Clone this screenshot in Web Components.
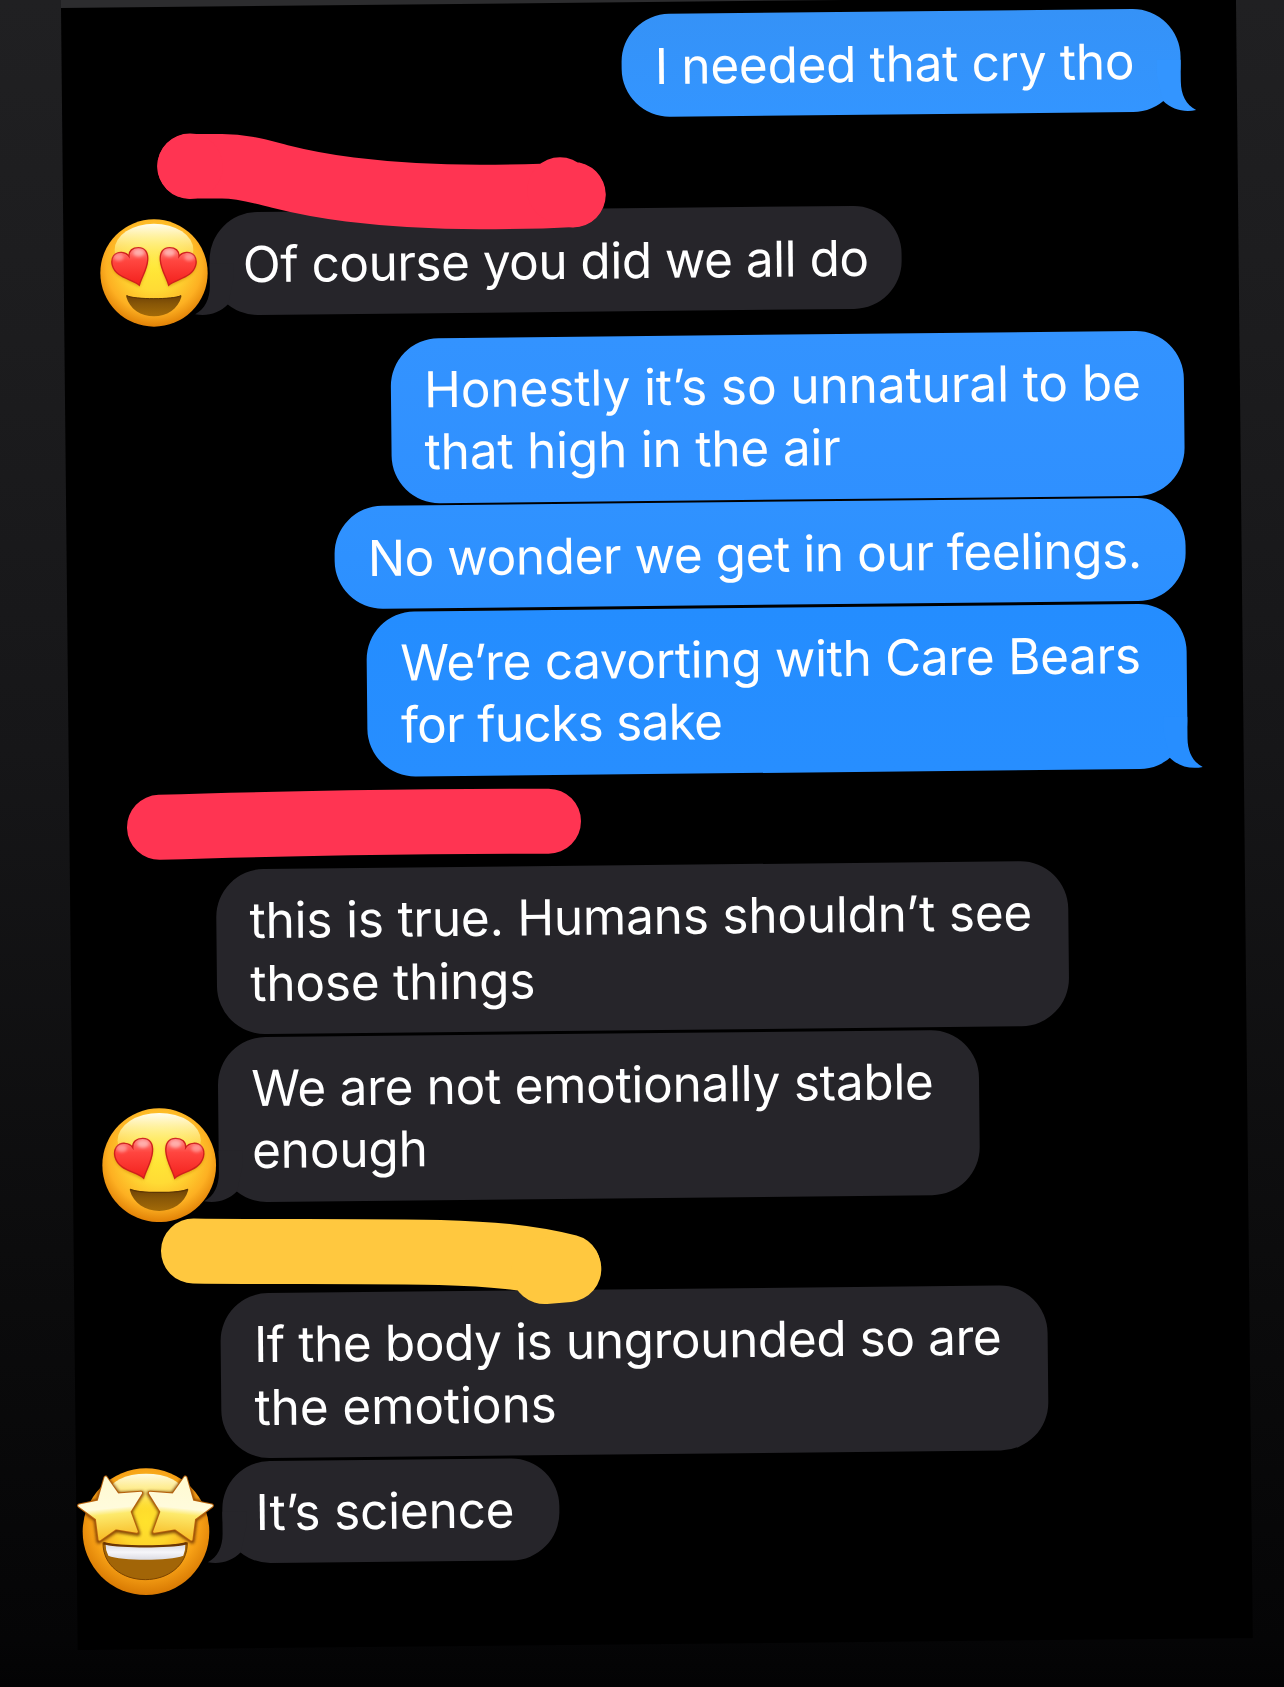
<!DOCTYPE html>
<html lang="en">
<head>
  <meta charset="UTF-8">
  <meta name="viewport" content="width=device-width, initial-scale=1.0">
  <title>Group chat</title>
  <style>
    html, body {
      margin: 0;
      height: 1687px;
      overflow: hidden;
    }

    body {
      display: flow-root;
      position: relative;
      font-family: Inter, "Liberation Sans", sans-serif;
      color: #fff;
      background:
        linear-gradient(#2c2c2e, #2c2c2e) 61px 0 / 800px 10px no-repeat,
        linear-gradient(#202022, #1c1c1e 340px, #161618 750px, #0c0c0d 1250px, #050506 1640px, #030304);
    }
  </style>
</head>
<body>

  <chat-thread>
    <message-group side="out">
      <message-bubble tail width="559.7" style="--top: #3592f7; --bottom: #3395ff">
        <text-line fit="475">I needed that cry tho</text-line>
      </message-bubble>
    </message-group>

    <message-group side="in" named>
      <message-bubble tail width="691.8">
        <text-line fit="623.4">Of course you did we all do</text-line>
      </message-bubble>
    </message-group>

    <message-group side="out">
      <message-bubble width="793.7" style="--top: #3393ff; --bottom: #2f90ff">
        <text-line fit="712">Honestly it’s so unnatural to be</text-line>
        <text-line fit="416.5">that high in the air</text-line>
      </message-bubble>
      <message-bubble width="851.7" style="--top: #3092ff; --bottom: #2c90ff">
        <text-line fit="768">No wonder we get in our feelings.</text-line>
      </message-bubble>
      <message-bubble tail width="820.2" style="--top: #248dff; --bottom: #278eff">
        <text-line fit="738.5">We’re cavorting with Care Bears</text-line>
        <text-line fit="321">for fucks sake</text-line>
      </message-bubble>
    </message-group>

    <message-group side="in" named>
      <message-bubble width="852">
        <text-line fit="781.8">this is true. Humans shouldn’t see</text-line>
        <text-line fit="284">those things</text-line>
      </message-bubble>
      <message-bubble tail width="761.5">
        <text-line fit="680.6">We are not emotionally stable</text-line>
        <text-line fit="171.5">enough</text-line>
      </message-bubble>
    </message-group>

    <message-group side="in" named>
      <message-bubble width="827.6">
        <text-line fit="743">If the body is ungrounded so are</text-line>
        <text-line fit="301">the emotions</text-line>
      </message-bubble>
      <message-bubble tail width="337">
        <text-line fit="254">It’s science</text-line>
      </message-bubble>
    </message-group>
  </chat-thread>

  <markup-canvas>
    <emoji-sticker kind="hearts" style="left: 100.4px; top: 219.4px; width: 108px"></emoji-sticker>
    <emoji-sticker kind="hearts" style="left: 102.3px; top: 1107.7px; width: 114.4px"></emoji-sticker>
    <emoji-sticker kind="stars" style="left: 75.1px; top: 1466.7px; width: 141.3px"></emoji-sticker>
  </markup-canvas>

  <script>

    const define = (name, html, extra = {}) => {
      const template = document.createElement('template');
      template.innerHTML = html;
      customElements.define(name, class extends HTMLElement {
        constructor() {
          super();
          this.attachShadow({mode: 'open'});
          this.shadowRoot.appendChild(template.content.cloneNode(true));
        }
        connectedCallback() {
          if (extra.connected) extra.connected(this);
        }
      });
    };

    define('chat-thread', `
      <style>
        :host {
          display: flex;
          flex-direction: column;
          box-sizing: border-box;
          width: 1175px;
          height: 1642px;
          margin: 8px 0 0 61.4px;
          padding: 12.3px 55.7px 0 145.8px;
          background: #000;
          transform: rotate(-0.585deg);
          transform-origin: 0 0;
        }
      </style>
      <slot></slot>`);

    define('message-group', `
      <style>
        :host {
          display: flex;
          flex-direction: column;
          gap: 2.8px;
          align-items: flex-start;
          margin-top: 24.8px;
          --top: #26252a;
          --bottom: #26252a;
        }
        :host(:first-child) { margin-top: 0; }
        :host([named]) { margin-top: 91.5px; }
        :host([side="out"]) {
          align-items: flex-end;
          --tail-left: auto;
          --tail-right: -15px;
          --tail-flip: none;
        }
      </style>
      <slot></slot>`);

    define('message-bubble', `
      <style>
        :host {
          display: block;
          position: relative;
          box-sizing: border-box;
          padding: 20.3px 0 19.8px 33.5px;
          border-radius: 48px;
          background: linear-gradient(var(--top), var(--bottom));
        }
        svg {
          display: none;
          position: absolute;
          bottom: 0;
          left: var(--tail-left, -15px);
          right: var(--tail-right, auto);
          transform: var(--tail-flip, scaleX(-1));
        }
        :host([tail]) svg { display: block; }
        path { fill: var(--bottom); }
      </style>
      <slot></slot>
      <svg width="39" height="52" viewBox="0 -14 39 52">
        <path d="M24 -14V8C24 21 29 31.500 39 36.600C27 39 15 36 6 27L0 0V-14Z"/>
      </svg>`, {
      connected(el) {
        el.style.width = el.getAttribute('width') + 'px';
      }
    });

    // tracks each line so that its ink is as wide as the fit attribute says
    const ctx = document.createElement('canvas').getContext('2d');

    define('text-line', `
      <style>
        :host {
          display: block;
          font-size: 49.5px;
          line-height: 62.4px;
          white-space: nowrap;
        }
      </style>
      <slot></slot>`, {
      connected(el) {
        const text = el.textContent;
        ctx.font = '49.5px Inter, "Liberation Sans", sans-serif';
        const m = ctx.measureText(text);
        const ink = m.actualBoundingBoxLeft + m.actualBoundingBoxRight;
        el.style.letterSpacing = (el.getAttribute('fit') - 1 - ink) / (text.length - 1) + 'px';
      }
    });

    define('markup-canvas', `
      <style>
        :host {
          display: block;
          position: absolute;
          inset: 0;
        }
        svg { position: absolute; inset: 0; }
        .ink { fill: none; stroke-linecap: round; stroke-linejoin: round; }
        .red { stroke: #ff3452; }
        .yellow { stroke: #ffc83f; }
      </style>
      <slot></slot>
      <svg width="1284" height="1687" viewBox="0 0 1284 1687">
        <g class="ink red" stroke-width="65.500">
          <path stroke-width="64.500" d="M189.600 166.200H222C244 166.200 262 172 280 176.500C303 182.300 326 186.500 350 189.500C395 195 430 197 480 197C520 197 550 196 573 194.700"/>
          <path d="M190 166.200V166.300M560 190V190.100M573 194.700V194.800"/>
          <path stroke-width="65" d="M159.500 827.300C230 825 280 824 350 822.800C430 821.300 480 821 548.500 821.200"/>
        </g>
        <g class="ink yellow" stroke-width="66">
          <path stroke-width="65" d="M193.500 1251C260 1252 380 1251 440 1252.500C490 1254 530 1257 568.300 1267"/>
          <path d="M568.300 1269L544.500 1271"/>
        </g>
      </svg>`);

    const faces = {
      hearts: `
        <svg viewBox="62 58 324 324">
          <defs>
            <radialGradient id="face" cx=".5" cy=".42" r=".6">
              <stop offset="0" stop-color="#ffe936"/>
              <stop offset=".4" stop-color="#ffdb35"/>
              <stop offset=".75" stop-color="#fdb022"/>
              <stop offset="1" stop-color="#dd7a02"/>
            </radialGradient>
            <linearGradient id="shine" x2="0" y2="1">
              <stop offset="0" stop-color="#fffdf0"/>
              <stop offset=".3" stop-color="#fff6a8" stop-opacity=".8"/>
              <stop offset="1" stop-color="#ffe93a" stop-opacity="0"/>
            </linearGradient>
            <linearGradient id="heart" x2="0" y2="1">
              <stop offset="0" stop-color="#ff8480"/>
              <stop offset=".35" stop-color="#ff4640"/>
              <stop offset="1" stop-color="#f3201c"/>
            </linearGradient>
            <linearGradient id="mouth" x2="0" y2="1">
              <stop offset="0" stop-color="#6d4106"/>
              <stop offset=".4" stop-color="#875607"/>
              <stop offset="1" stop-color="#a36b08"/>
            </linearGradient>
            <filter id="soft" x="-20%" y="-20%" width="140%" height="140%"><feGaussianBlur stdDeviation="4"/></filter>
          </defs>
          <circle cx="224" cy="220" r="161" fill="url(#face)"/>
          <ellipse cx="224" cy="150" rx="118" ry="78" fill="url(#shine)"/>
          <g id="eye">
            <path d="M180 262C150 244 100 232 97 194C96 164 136 150 150 174C155 147 178 142 192 150C222 166 195 224 180 262Z" fill="#c77b05" opacity=".6" filter="url(#soft)"/>
            <path d="M180 257C164 242 139 240 118 224C98 209 92 184 103 168C115 153 140 156 149 170C148 153 160 144 177 144C198 144 207 160 205 182C203 210 187 232 180 257Z" fill="url(#heart)" stroke="#cf1f1c" stroke-width="4"/>
            <ellipse cx="118" cy="173" rx="15" ry="11" fill="#fff" opacity=".35" filter="url(#soft)"/>
            <ellipse cx="178" cy="160" rx="17" ry="11" fill="#fff" opacity=".45" filter="url(#soft)"/>
          </g>
          <use href="#eye" transform="translate(448 0) scale(-1 1)"/>
          <path d="M142 287C165 300 282 300 305 287Q307 287 306 292C296 328 262 350 224 350C185 350 151 328 141 292Q140 287 142 287Z" fill="url(#mouth)"/>
          <path d="M142 288C165 300 282 300 305 288" fill="none" stroke="#5c3605" stroke-width="3"/>
        </svg>`,
      stars: `
        <svg viewBox="46 50 424 390">
          <defs>
            <radialGradient id="face" cx=".5" cy=".42" r=".6">
              <stop offset="0" stop-color="#ffe22c"/>
              <stop offset=".35" stop-color="#fdd42c"/>
              <stop offset=".7" stop-color="#f7a116"/>
              <stop offset="1" stop-color="#d47400"/>
            </radialGradient>
            <linearGradient id="shine" x2="0" y2="1">
              <stop offset="0" stop-color="#fffbe0"/>
              <stop offset=".5" stop-color="#fff08a" stop-opacity=".85"/>
              <stop offset="1" stop-color="#ffe93a" stop-opacity="0"/>
            </linearGradient>
            <linearGradient id="star" x2=".1" y2="1">
              <stop offset="0" stop-color="#fffad0"/>
              <stop offset=".54" stop-color="#fffbdc"/>
              <stop offset=".64" stop-color="#fdea6c"/>
              <stop offset="1" stop-color="#f8c02c"/>
            </linearGradient>
            <linearGradient id="teeth" x2="0" y2="1">
              <stop offset="0" stop-color="#d9d9e0"/>
              <stop offset=".5" stop-color="#f6f6fa"/>
              <stop offset="1" stop-color="#dcdce3"/>
            </linearGradient>
            <filter id="soft" x="-20%" y="-20%" width="140%" height="140%"><feGaussianBlur stdDeviation="5"/></filter>
          </defs>
          <circle cx="259" cy="244" r="190" fill="url(#face)"/>
          <ellipse cx="259" cy="126" rx="112" ry="56" fill="url(#shine)"/>
          <path d="M130 277C180 292 335 292 383 277C384 345 325 388 257 388C188 388 129 345 130 277Z" fill="#a26507" stroke="#7a4300" stroke-width="3"/>
          <path d="M132 279C180 292 335 292 381 279" fill="none" stroke="#6b3503" stroke-width="8"/>
          <path d="M138 283C180 294 335 294 377 283Q378 299 371 316C330 332 185 332 146 316Q137 299 138 283Z" fill="url(#teeth)"/>
          <clipPath id="disc"><circle cx="259" cy="244" r="190"/></clipPath>
          <g clip-path="url(#disc)">
            <g id="shade" stroke-linejoin="round">
              <path d="M138 82L176 132L247 129L211 184L235 250L168 240L117 273L109 208L56 168L115 152Z" fill="#6e2f00" stroke="#6e2f00" stroke-width="14" opacity=".85" filter="url(#soft)"/>
            </g>
            <use href="#shade" transform="translate(515 0) scale(-1 1)"/>
          </g>
          <g id="eye" stroke-linejoin="round">
            <path d="M138 82L174 133L244 128L209 184L231 244L168 233L120 267L112 205L59 166L117 154Z" fill="#b8620c" stroke="#b8620c" stroke-width="13"/>
            <path d="M138 82L174 133L244 128L209 184L231 244L168 233L120 267L112 205L59 166L117 154Z" fill="url(#star)" stroke="url(#star)" stroke-width="7"/>
          </g>
          <use href="#eye" transform="translate(515 0) scale(-1 1)"/>
        </svg>`
    };

    define('emoji-sticker', `
      <style>
        :host {
          display: block;
          position: absolute;
        }
        svg { display: block; width: 100%; }
      </style>
      <div></div>`, {
      connected(el) {
        el.shadowRoot.querySelector('div').innerHTML = faces[el.getAttribute('kind')];
      }
    });
  </script>
</body>
</html>
